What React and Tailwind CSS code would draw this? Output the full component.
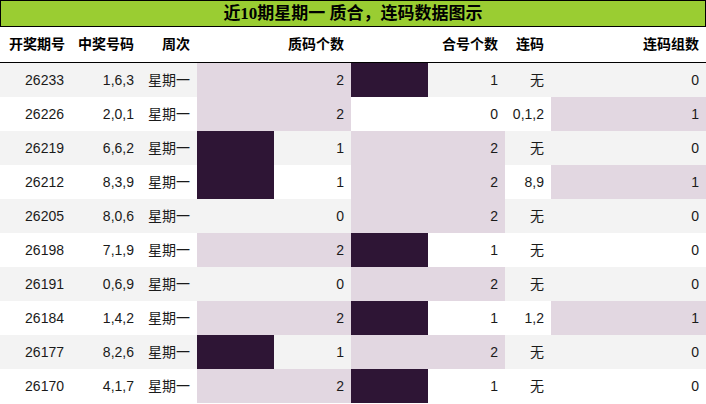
import React from "react";

const rows = [
  ["26233", "1,6,3", "星期一", 2, 1, "无", 0],
  ["26226", "2,0,1", "星期一", 2, 0, "0,1,2", 1],
  ["26219", "6,6,2", "星期一", 1, 2, "无", 0],
  ["26212", "8,3,9", "星期一", 1, 2, "8,9", 1],
  ["26205", "8,0,6", "星期一", 0, 2, "无", 0],
  ["26198", "7,1,9", "星期一", 2, 1, "无", 0],
  ["26191", "0,6,9", "星期一", 0, 2, "无", 0],
  ["26184", "1,4,2", "星期一", 2, 1, "1,2", 1],
  ["26177", "8,2,6", "星期一", 1, 2, "无", 0],
  ["26170", "4,1,7", "星期一", 2, 1, "无", 0],
];

const cols = "grid grid-cols-[71px_70px_56px_154px_154px_46px_155px]";

// data bar: full = light, partial = dark
const BarCell = ({ value, max }) => {
  const pct = (value / max) * 100;
  const full = value === max;
  return (
    <div className="relative flex items-center justify-end pr-[7px]">
      {value > 0 && (
        <div
          className={`absolute inset-y-0 left-0 ${full ? "bg-[#e2d7e1]" : "bg-[#2e1535]"}`}
          style={{ width: `${pct}%` }}
        />
      )}
      <span className="relative">{value}</span>
    </div>
  );
};

const App = () => {
  return (
    <div
      className="w-[706px] bg-white text-[14px] text-[#1a1a1a]"
      style={{ fontFamily: '"Liberation Sans", "Noto Sans CJK SC", sans-serif' }}
    >
      {/* Title */}
      <div className="h-[27px] border border-black bg-[#9acd32] flex items-center justify-center">
        <span
          className="text-[17px] font-bold text-black leading-none"
          style={{ fontFamily: '"Liberation Serif", "Noto Sans CJK SC", serif' }}
        >
          近10期星期一 质合，连码数据图示
        </span>
      </div>

      {/* Header */}
      <div className={`${cols} h-[36px] border-b border-black font-bold text-black`}>
        {["开奖期号", "中奖号码", "周次", "质码个数", "合号个数", "连码", "连码组数"].map((h, i) => (
          <div key={i} className={`flex items-center ${i === 0 ? "pl-[9px]" : "justify-end pr-[7px]"}`}>
            {h}
          </div>
        ))}
      </div>

      {/* Rows */}
      {rows.map((r, i) => (
        <div key={r[0]} className={`${cols} h-[34px] ${i % 2 === 0 ? "bg-[#f3f3f3]" : "bg-white"}`}>
          <div className="flex items-center justify-end pr-[7px]">{r[0]}</div>
          <div className="flex items-center justify-end pr-[7px]">{r[1]}</div>
          <div className="flex items-center justify-end pr-[7px]">{r[2]}</div>
          <BarCell value={r[3]} max={2} />
          <BarCell value={r[4]} max={2} />
          <div className="flex items-center justify-end pr-[7px]">{r[5]}</div>
          <BarCell value={r[6]} max={1} />
        </div>
      ))}
    </div>
  );
};

export default App;
